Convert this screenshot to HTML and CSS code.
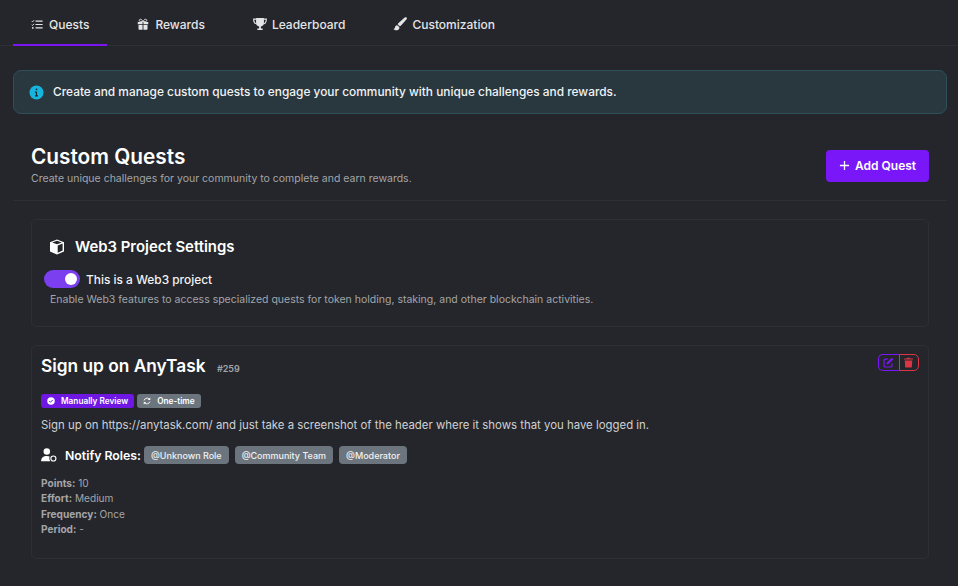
FILE: index.html
```html
<!DOCTYPE html>
<html lang="en">
<head>
<meta charset="utf-8">
<title>Custom Quests</title>
<link rel="stylesheet" href="styles.css">
</head>
<body>
<nav class="tabs">
  <a class="tab active">
    <svg class="tab-icon" viewBox="0 0 16 16"><path d="M1 3.500l1 1 2-2.200M1 8.300l1 1 2-2.200" fill="none" stroke="currentColor" stroke-width="1.300"/><path d="M6 3.500h9.500M6 8h9.500M6 12.500h9.500" stroke="currentColor" stroke-width="1.400"/><circle cx="2.400" cy="12.500" r="1.200" fill="currentColor"/></svg>
    Quests</a>
  <a class="tab">
    <svg class="tab-icon" viewBox="0 0 16 16"><path fill="currentColor" d="M1 4.500h6.400v3H1zM8.600 4.500H15v3H8.600zM2 8.600h5.400V15H3a1 1 0 0 1-1-1zM8.600 8.600H14V14a1 1 0 0 1-1 1H8.600z"/><path fill="none" stroke="currentColor" stroke-width="1.300" d="M8 4.200C6.800 1.600 5.600 1 4.700 1 3.600 1 3 1.800 3 2.600c0 1 .8 1.600 2 1.600zM8 4.200C9.200 1.600 10.400 1 11.300 1c1.100 0 1.700.8 1.700 1.600 0 1-.8 1.600-2 1.600z"/></svg>
    Rewards</a>
  <a class="tab wide-tab">
    <svg class="tab-icon wide" viewBox="0 0 16 16"><path fill="currentColor" d="M3.500 1h9v5.500a4.500 4.500 0 0 1-3.500 4.300V13h2v1.800H5V13h2v-2.200a4.500 4.500 0 0 1-3.500-4.300z"/><path fill="none" stroke="currentColor" stroke-width="1.300" d="M3.500 2.500H.8c0 3 1 5 3.500 5.500M12.500 2.500h2.700c0 3-1 5-3.500 5.500"/></svg>
    Leaderboard</a>
  <a class="tab wide-tab">
    <svg class="tab-icon wide" viewBox="0 0 16 16"><path fill="currentColor" d="M15.500.6c-.6-.6-1.500-.5-2.100 0L6.300 6.900c-.5.5-.8 1-1 1.500l2.400 2.300c.6-.2 1.100-.5 1.500-1l6.300-7.100c.5-.6.6-1.400 0-2zM4.700 9.300C3 9.500 2.500 10.700 2.300 11.800 2.100 13 1.500 13.500.5 13.600c1 1.200 2.500 1.800 4 1.600 2-.3 3-1.600 2.700-3.700z"/></svg>
    Customization</a>
</nav>

<main class="page">
  <div class="notice">
    <svg class="notice-icon" viewBox="0 0 16 16"><circle cx="8" cy="8" r="7.500" fill="#16b5df"/><rect x="7" y="3.600" width="2" height="2" rx="1" fill="#1f2a33"/><path d="M6.300 7h2.300v4h1v1.200H6.400V11h.9V8.200h-1z" fill="#1f2a33"/></svg>
    <span>Create and manage custom quests to engage your community with unique challenges and rewards.</span>
  </div>

  <header class="head">
    <div>
      <h1>Custom Quests</h1>
      <p class="sub">Create unique challenges for your community to complete and earn rewards.</p>
    </div>
    <button class="add-btn">
      <svg class="plus" viewBox="0 0 12 12"><path d="M6 1v10M1 6h10" stroke="currentColor" stroke-width="1.400"/></svg>
      Add Quest</button>
  </header>

  <section class="card web3">
    <h2>
      <svg class="cube" viewBox="0 0 16 16"><path fill="#fff" d="M8 .4l7 2.800v9.200l-7 3.200-7-3.200V3.200z"/><path fill="#24262b" d="M3.200 3.500L8 1.800l4.800 1.700L8 5.300zM8.700 6.500l4.900-1.900v7l-4.900 2.200z"/></svg>
      Web3 Project Settings
    </h2>
    <div class="switch-row">
      <span class="switch"><span class="knob"></span></span>
      <span class="switch-label">This is a Web3 project</span>
    </div>
    <p class="hint">Enable Web3 features to access specialized quests for token holding, staking, and other blockchain activities.</p>
  </section>

  <section class="card quest">
    <div class="actions">
      <span class="act edit"><svg viewBox="0 0 16 16"><path fill="none" stroke="currentColor" stroke-width="1.700" d="M13 9.500V13a1.500 1.500 0 0 1-1.500 1.500H3A1.500 1.500 0 0 1 1.500 13V4.500A1.500 1.500 0 0 1 3 3h4"/><path fill="currentColor" d="M12.700 1l2.300 2.300-7 7-3 .7.700-3z"/></svg></span>
      <span class="act del"><svg viewBox="0 0 16 16"><path fill="currentColor" d="M6 1h4l.6 1.300H14.500v1.500h-13V2.300h3.900zM2.500 5h11l-.7 9.500a1 1 0 0 1-1 .9H4.200a1 1 0 0 1-1-.9z"/></svg></span>
    </div>
    <h3>Sign up on AnyTask <span class="qid">#259</span></h3>
    <div class="badges">
      <span class="badge purple"><svg viewBox="0 0 16 16"><circle cx="8" cy="8" r="7.500" fill="#fff"/><path d="M4.500 8.200l2.400 2.400 4.500-4.800" fill="none" stroke="#6f17e3" stroke-width="2"/></svg>Manually Review</span>
      <span class="badge grey"><svg viewBox="0 0 16 16"><path fill="none" stroke="#fff" stroke-width="1.800" d="M2.200 7a6 6 0 0 1 10-3M13.800 9a6 6 0 0 1-10 3"/><path fill="#fff" d="M14.500 1v5h-5zM1.500 15v-5h5z"/></svg>One-time</span>
    </div>
    <p class="desc">Sign up on https://anytask.com/ and just take a screenshot of the header where it shows that you have logged in.</p>
    <div class="roles">
      <svg class="roles-icon" viewBox="0 0 18 16"><circle cx="6.500" cy="4" r="3.700" fill="#fff"/><path fill="#fff" d="M0 15c0-4 2.500-6 6.500-6 1.500 0 2.500.3 3.300.8-.7 1.400-.5 3.800.7 5.200z"/><circle cx="14" cy="12" r="2.900" fill="none" stroke="#fff" stroke-width="1.300"/></svg>
      <strong>Notify Roles:</strong>
      <span class="role">@Unknown Role</span>
      <span class="role">@Community Team</span>
      <span class="role">@Moderator</span>
    </div>
    <ul class="meta">
      <li><b>Points:</b> 10</li>
      <li><b>Effort:</b> Medium</li>
      <li><b>Frequency:</b> Once</li>
      <li><b>Period:</b> -</li>
    </ul>
  </section>
</main>
</body>
</html>
```
FILE: styles.css
```css
* { box-sizing: border-box; }
html, body { margin: 0; height: 586px; overflow: hidden; }
body {
  background: #24262b;
  color: #fff;
  font-family: Inter, "Liberation Sans", sans-serif;
  font-size: 12px;
}
.tabs {
  display: flex;
  height: 46px;
  padding-left: 13px;
  border-bottom: 1px solid #2e3035;
}
.tab {
  display: flex;
  align-items: center;
  gap: 6px;
  height: 46px;
  padding: 4px 18px 0;
  margin-right: 12px;
  font-size: 12px;
  font-weight: 500;
  color: #e4e5e7;
  border-bottom: 2px solid transparent;
}
.tab.active { border-bottom-color: #7a16f0; }
.wide-tab { gap: 5px; }
.tab-icon { width: 12px; height: 13px; flex: none; }
.tab-icon.wide { width: 14px; height: 14px; }
.page { padding: 24px 11px 0 13px; }
.notice {
  display: flex;
  align-items: center;
  gap: 9px;
  height: 44px;
  padding: 0 15px 1px;
  background: #29373f;
  border: 1px solid #2f4f5b;
  border-radius: 8px;
  font-size: 11.880px;
  font-weight: 500;
  color: #f1f3f4;
}
.notice-icon { width: 15px; height: 15px; flex: none; margin-top: 1px; }
.head {
  display: flex;
  justify-content: space-between;
  align-items: center;
  height: 87px;
  padding: 17px 18px 0 18px;
  border-bottom: 1px solid #2e3035;
}
h1 { margin: 0; font-size: 20.800px; line-height: 24px; font-weight: 600; }
.sub { margin: 3px 0 0; font-size: 10.500px; line-height: 14px; color: #a3a5a9; }
.add-btn {
  display: flex;
  align-items: center;
  gap: 5px;
  width: 103px;
  height: 32px;
  padding: 0 0 0 13px;
  border: 0;
  border-radius: 4px;
  background: #7a17f8;
  color: #fff;
  font: 600 12px Inter, "Liberation Sans", sans-serif;
}
.plus { width: 11px; height: 11px; }
.card {
  margin: 0 18px;
  border: 1px solid #2d2f34;
  border-radius: 5px;
}
.web3 { height: 108px; margin-top: 18px; padding: 17px 12px 0 12px; }
h2 {
  display: flex;
  align-items: center;
  gap: 10px;
  margin: 0 0 0 5px;
  font-size: 14.900px;
  line-height: 20px;
  font-weight: 600;
}
.cube { width: 16px; height: 16px; }
.switch-row { display: flex; align-items: center; gap: 6px; margin-top: 13px; }
.switch {
  display: flex;
  align-items: center;
  justify-content: flex-end;
  width: 36px;
  height: 18px;
  padding-right: 3px;
  border-radius: 9px;
  background: #7b3ff0;
}
.knob { width: 12px; height: 12px; border-radius: 50%; background: #fff; }
.switch-label { font-size: 11.900px; font-weight: 500; color: #f3f3f4; }
.hint { margin: 5px 0 0 6px; font-size: 10.500px; line-height: 14px; color: #a3a5a9; }
.quest { position: relative; height: 214px; margin-top: 18px; padding: 9px 9px 0; }
.actions {
  position: absolute;
  top: 8px;
  right: 9px;
  display: flex;
  height: 17px;
}
.act {
  display: flex;
  align-items: center;
  justify-content: center;
  width: 20.500px;
  height: 17px;
  border: 1px solid;
}
.act svg { width: 11px; height: 11px; }
.edit { color: #7a17f8; border-radius: 5px 0 0 5px; border-right: 0; }
.del { color: #dc3545; border-radius: 0 5px 5px 0; }
h3 { margin: 0; font-size: 17.300px; line-height: 22px; font-weight: 600; }
.qid { margin-left: 7px; font-size: 9px; font-weight: 600; color: #a3a5a9; }
.badges { display: flex; gap: 3px; margin-top: 14px; }
.badge {
  display: flex;
  align-items: center;
  gap: 6px;
  height: 14px;
  padding: 0 6px;
  border-radius: 3px;
  font-size: 8.250px;
  font-weight: 600;
}
.badge svg { width: 8px; height: 8px; flex: none; }
.purple { background: #6f17e3; }
.grey { background: #6c757d; }
.desc { margin: 9px 0 0; font-size: 11.400px; line-height: 16px; color: #d0d1d3; }
.roles { display: flex; align-items: center; margin-top: 13px; }
.roles-icon { width: 16px; height: 14px; margin-right: 8px; }
.roles strong { font-size: 12.300px; font-weight: 600; margin-right: 3px; }
.role {
  display: flex;
  align-items: center;
  height: 18px;
  margin-right: 6px;
  padding: 0 7px;
  border-radius: 4px;
  background: #6c757d;
  font-size: 9px;
  font-weight: 500;
  color: #f0f1f2;
}
.meta {
  margin: 12px 0 0;
  padding: 0;
  list-style: none;
  font-size: 10.100px;
  line-height: 15.300px;
  color: #a3a5a9;
}
.meta b { font-weight: 700; }
```
